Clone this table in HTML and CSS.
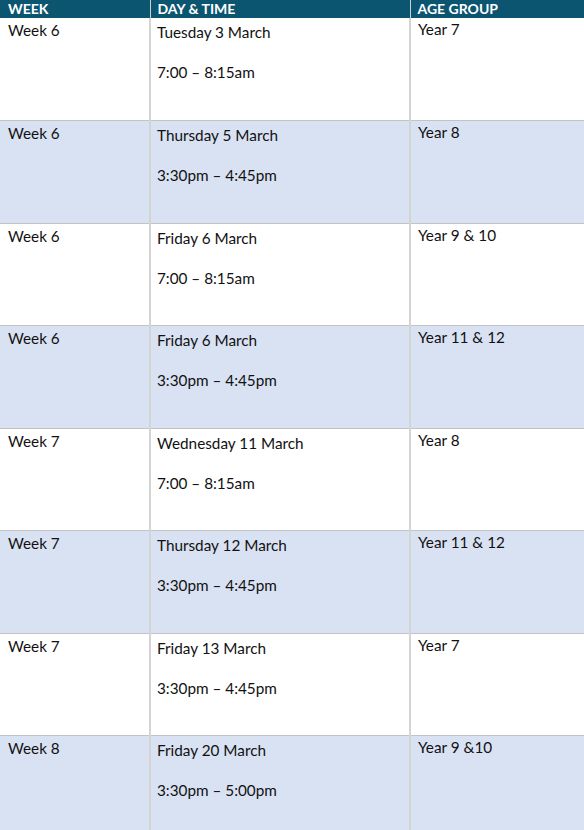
FILE: index.html
```html
<!DOCTYPE html>
<html>
<head>
<meta charset="utf-8">
<link rel="stylesheet" href="styles.css">
</head>
<body>
<table class="sched">
  <colgroup><col class="c1"><col class="c2"><col class="c3"></colgroup>
  <thead>
    <tr><th>WEEK</th><th>DAY &amp; TIME</th><th>AGE GROUP</th></tr>
  </thead>
  <tbody>
    <tr><td class="wk">Week 6</td><td class="day"><p>Tuesday 3 March</p><p>7:00 – 8:15am</p></td><td class="age">Year 7</td></tr>
    <tr class="alt"><td class="wk">Week 6</td><td class="day"><p>Thursday 5 March</p><p>3:30pm – 4:45pm</p></td><td class="age">Year 8</td></tr>
    <tr><td class="wk">Week 6</td><td class="day"><p>Friday 6 March</p><p>7:00 – 8:15am</p></td><td class="age">Year 9 &amp; 10</td></tr>
    <tr class="alt"><td class="wk">Week 6</td><td class="day"><p>Friday 6 March</p><p>3:30pm – 4:45pm</p></td><td class="age">Year 11 &amp; 12</td></tr>
    <tr><td class="wk">Week 7</td><td class="day"><p>Wednesday 11 March</p><p>7:00 – 8:15am</p></td><td class="age">Year 8</td></tr>
    <tr class="alt"><td class="wk">Week 7</td><td class="day"><p>Thursday 12 March</p><p>3:30pm – 4:45pm</p></td><td class="age">Year 11 &amp; 12</td></tr>
    <tr><td class="wk">Week 7</td><td class="day"><p>Friday 13 March</p><p>3:30pm – 4:45pm</p></td><td class="age">Year 7</td></tr>
    <tr class="alt"><td class="wk">Week 8</td><td class="day"><p>Friday 20 March</p><p>3:30pm – 5:00pm</p></td><td class="age">Year 9 &amp;10</td></tr>
  </tbody>
</table>
</body>
</html>
```
FILE: styles.css
```css
html, body { margin: 0; padding: 0; background: #fff; }
body { font-family: "Lato", "Liberation Sans", sans-serif; color: #111; font-size: 15.3px; }
.sched { border-collapse: collapse; table-layout: fixed; width: 584px; }
.c1 { width: 150px; }
.c2 { width: 260px; }
.c3 { width: 174px; }
thead th {
  background: #0b5570;
  color: #fff;
  font-weight: 700;
  text-align: left;
  height: 18px;
  padding: 0 0 0 8px;
  font-size: 14px;
  line-height: 18px;
  border-right: 1px solid #d0d0d0;
}
thead th:nth-child(2) { padding-left: 7px; }
thead th:nth-child(3) { padding-left: 7px; }
tbody td {
  height: 102.5px;
  box-sizing: border-box;
  vertical-align: top;
  padding: 0 0 0 8px;
  border-right: 2px solid #d4d4d4;
  border-bottom: 1px solid #c3c3c3;
  line-height: 20px;
}
tbody td:last-child { border-right: 1px solid #d4d4d4; }
tbody tr.alt td { background: #d9e2f3; }
td.wk { padding-top: 2px; }
td.day { padding-top: 4px; padding-left: 6px; }
td.age { padding-top: 1px; padding-left: 7px; }
td.day p { margin: 0 0 20px 0; }
```
